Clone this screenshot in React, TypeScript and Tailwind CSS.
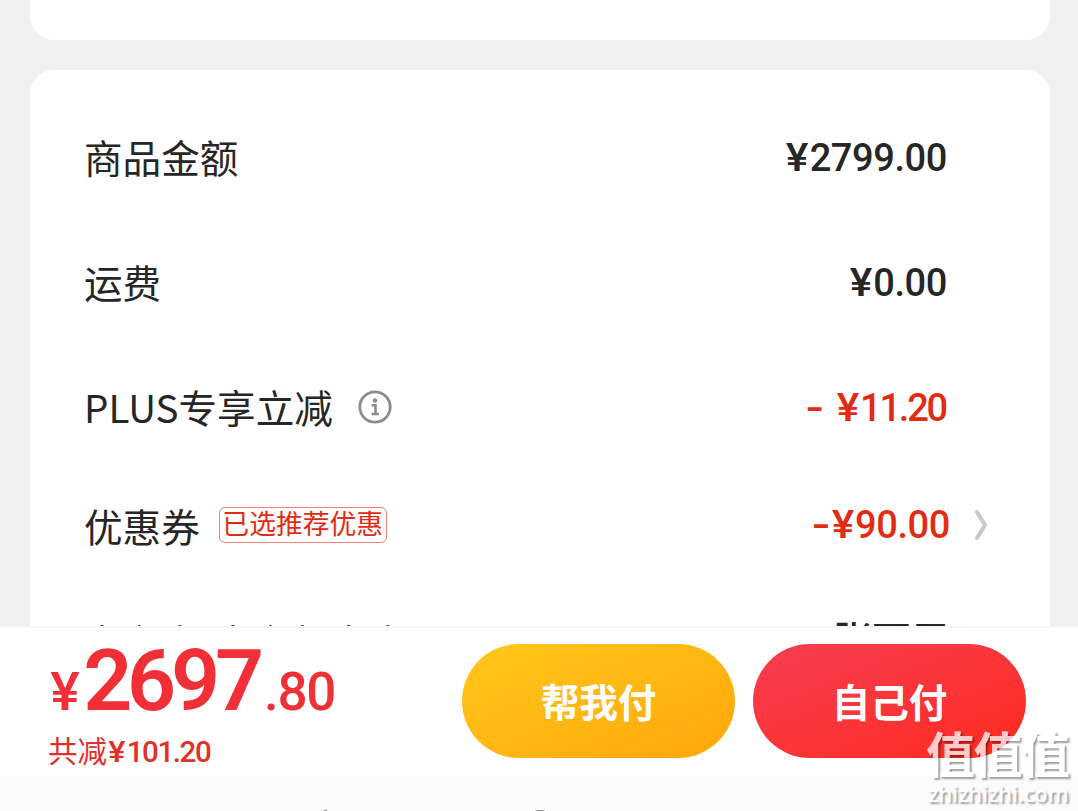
interface AmountProps {
  value: string;
  minus?: 'tight' | 'loose';
  className: string;
}

function Amount({ value, minus, className }: AmountProps) {
  return (
    <span className={`ml-auto flex items-baseline whitespace-nowrap font-[Roboto,sans-serif] text-[38px] font-medium leading-[56px] ${className}`}>
      {minus && (
        <span className={`inline-block origin-right scale-x-140 ${minus === 'loose' ? 'mr-[17px]' : 'mr-[3px]'}`}>-</span>
      )}
      <span className="mr-[2px] inline-block scale-x-112 tracking-normal">¥</span>
      <span>{value}</span>
    </span>
  );
}

function Label({ children }: { children: React.ReactNode }) {
  return (
    <span className="-mt-1 whitespace-nowrap text-[38.6px] leading-[56px] text-[#262626]">{children}</span>
  );
}

function InfoIcon() {
  return (
    <svg className="ml-[25px] mb-[3px] size-[34px]" viewBox="0 0 34 34" fill="none">
      <circle cx="17" cy="17" r="15.2" stroke="#8c8c8c" strokeWidth="2.8" />
      <circle cx="17" cy="10.5" r="2.2" fill="#8c8c8c" />
      <path d="M13.5 15.3h4v8.5M13.5 24h7.4" stroke="#8c8c8c" strokeWidth="2.6" />
    </svg>
  );
}

function Chevron() {
  return (
    <svg className="ml-[23px] mr-[61px] h-8 w-4" viewBox="0 0 16 32" fill="none">
      <path d="M4 3 L12 16 L4 29" stroke="#c8c8c8" strokeWidth="4" strokeLinecap="round" strokeLinejoin="round" />
    </svg>
  );
}

function Watermark() {
  return (
    <div className="absolute left-[926px] top-[722px] w-[150px] text-white opacity-75 [text-shadow:2px_2px_2px_rgba(0,0,0,0.5)]">
      <div className="whitespace-nowrap text-[49px] font-bold leading-[60px] tracking-[-1.5px]">值值值</div>
      <div className="-mt-px ml-[2px] whitespace-nowrap font-['Noto_Sans',sans-serif] text-[22px] font-medium leading-6 tracking-[-0.1px]">zhizhizhi.com</div>
    </div>
  );
}

export default function App() {
  return (
    <div className="relative flex h-[811px] w-[1078px] flex-col overflow-hidden bg-[#f0f0f0] font-['Noto_Sans_CJK_SC',sans-serif]">
      <div className="mx-auto h-10 w-[1020px] shrink-0 translate-x-px rounded-b-[24px] bg-white" />

      <div className="mx-auto mt-[30px] flex h-[556px] w-[1020px] shrink-0 translate-x-px flex-col overflow-hidden rounded-t-[24px] bg-white">
        <div className="mt-[60px] flex h-14 shrink-0 items-center pl-[54px]">
          <Label>商品金额</Label>
          <Amount value="2799.00" className="mr-[103px] tracking-[-0.4px] text-[#262626]" />
        </div>
        <div className="mt-[69px] flex h-14 shrink-0 items-center pl-[54px]">
          <Label>运费</Label>
          <Amount value="0.00" className="mr-[103px] tracking-[-0.4px] text-[#262626]" />
        </div>
        <div className="mt-[69px] flex h-14 shrink-0 items-center pl-[54px]">
          <Label>PLUS专享立减</Label>
          <InfoIcon />
          <Amount value="11.20" minus="loose" className="mr-[104px] tracking-[-2.2px] text-[#e22b14]" />
        </div>
        <div className="mt-[61px] flex h-14 shrink-0 items-center pl-[54px]">
          <div className="mt-1 flex">
            <Label>优惠券</Label>
          </div>
          <span className="ml-[19px] mb-px flex h-9 w-[168px] items-center justify-center whitespace-nowrap rounded-md border border-[#ee8078] pb-[3px] text-[26.8px] leading-8 text-[#e22b14]">
            已选推荐优惠
          </span>
          <Amount value="90.00" minus="tight" className="tracking-[-0.4px] text-[#e22b14]" />
          <Chevron />
        </div>
        {/* mostly covered by the payment bar */}
        <div className="mt-[64px] flex h-14 shrink-0 items-start pl-[54px]">
          <Label>京东卡/京东超市卡</Label>
          <span className="-mt-[8px] ml-auto mr-[101px] whitespace-nowrap text-[38.5px] font-medium leading-[56px] text-[#262626]">张可用</span>
        </div>
      </div>

      <div className="flex h-[150px] shrink-0 border-t-2 border-[#f7f7f7] bg-white">
        <div className="w-[462px] pl-[48px]">
          <div className="flex h-[97px] items-baseline whitespace-nowrap font-[Roboto,sans-serif] text-[53px] font-medium leading-[106px] text-[#f03036]">
            <span className="ml-[3px] mr-[4px] inline-block scale-x-105">¥</span>
            <span className="text-[86px] font-semibold tracking-[-5.2px]">2697</span>
            <span className="ml-[5px] tracking-[-1.2px]">.80</span>
          </div>
          <div className="flex items-baseline whitespace-nowrap text-[#e1302a]">
            <span className="text-[29.5px] leading-[48px]">共减</span>
            <span className="ml-[2px] mr-[2px] inline-block scale-x-110 font-[Roboto,sans-serif] text-[29.5px] font-medium">¥</span>
            <span className="font-[Roboto,sans-serif] text-[29.5px] font-medium tracking-[-1.4px]">101.20</span>
          </div>
        </div>
        <button className="mt-4 h-[114px] w-[273px] rounded-full bg-linear-to-br from-[#ffc81a] to-[#ffa60a] text-[38.5px] font-bold text-white">
          帮我付
        </button>
        <button className="ml-[18px] mt-4 h-[114px] w-[273px] rounded-full bg-linear-to-br from-[#f63d50] to-[#ff2a17] text-[38.5px] font-bold text-white">
          自己付
        </button>
      </div>

      <div className="h-[35px] shrink-0 overflow-hidden bg-[#fbfbfb]">
        <svg className="h-[35px] w-full" viewBox="0 0 1078 35" fill="none">
          <path d="M305 50 L325.5 34.5 L346 50" stroke="#999" strokeWidth="2" />
          <circle cx="540" cy="49.5" r="14" stroke="#888" strokeWidth="3" />
        </svg>
      </div>

      <Watermark />
    </div>
  );
}
